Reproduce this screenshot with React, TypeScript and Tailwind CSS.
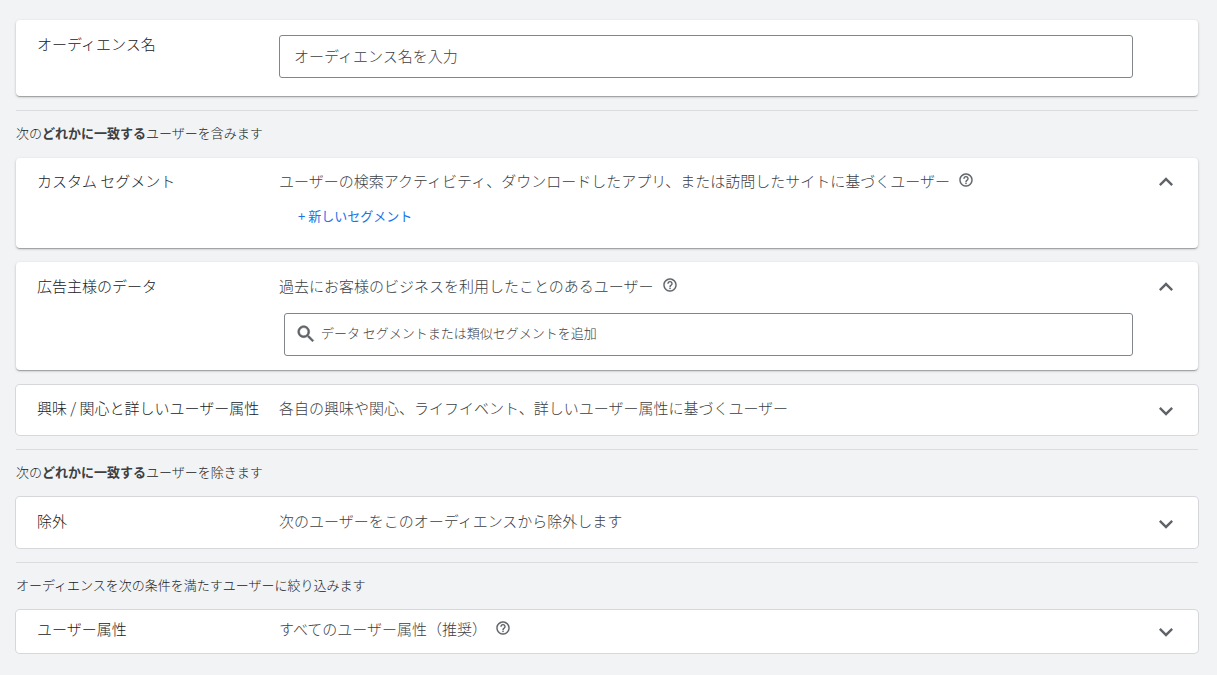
import React, { useState } from 'react';
import clsx from 'clsx';

const HelpButton: React.FC<{ label: string }> = ({ label }) => (
    <button type="button" aria-label={label} className="-mt-0.5 ml-2 shrink-0 text-[#5f6368]">
        <svg viewBox="0 0 24 24" className="h-4 w-4" fill="currentColor" stroke="currentColor" strokeWidth="0.2" aria-hidden="true">
            <path d="M11 18h2v-2h-2v2zm1-16C6.48 2 2 6.48 2 12s4.48 10 10 10 10-4.48 10-10S17.52 2 12 2zm0 18c-4.41 0-8-3.59-8-8s3.59-8 8-8 8 3.59 8 8-3.59 8-8 8zm0-14c-2.21 0-4 1.79-4 4h2c0-1.1.9-2 2-2s2 .9 2 2c0 2-3 1.75-3 5h2c0-2.25 3-2.5 3-5 0-2.21-1.79-4-4-4z" />
        </svg>
    </button>
);

const Chevron: React.FC<{ up: boolean }> = ({ up }) => (
    <svg viewBox="0 0 24 24" className="h-7 w-7" fill="currentColor" aria-hidden="true">
        {up ? (
            <path d="M12 8l-6 6 1.41 1.41L12 10.83l4.59 4.58L18 14z" />
        ) : (
            <path d="M16.59 8.59L12 13.17 7.41 8.59 6 10l6 6 6-6z" />
        )}
    </svg>
);

const raised = 'shadow-[0_1px_1px_0_rgba(0,0,0,0.14),0_2px_1px_-1px_rgba(0,0,0,0.12),0_1px_3px_0_rgba(0,0,0,0.2)]';
const outlined = 'ring-1 ring-[#d5d7da]';

interface PanelProps {
    title: string;
    description: string;
    help?: boolean;
    defaultOpen?: boolean;
    className: string;
    children?: React.ReactNode;
}

const Panel: React.FC<PanelProps> = ({ title, description, help, defaultOpen = false, className, children }) => {
    const [open, setOpen] = useState(defaultOpen);

    return (
        <section className={clsx('flex rounded bg-white pl-[21px] pr-[18px]', open ? raised : outlined, className)}>
            <h2 className="w-[242px] shrink-0 text-[15px] leading-[18px] font-light text-[#202124]">{title}</h2>
            <div className="min-w-0 flex-1">
                <div className="flex items-center text-[15px] leading-[18px] font-light text-[#3c4043]">
                    <p>{description}</p>
                    {help && <HelpButton label={`${title}のヘルプ`} />}
                </div>
                {open && children}
            </div>
            <button
                type="button"
                aria-label={title}
                aria-expanded={open}
                onClick={() => setOpen(!open)}
                className={clsx('-mt-1 -mb-2 ml-[19px] h-7 w-7 shrink-0 text-[#5f6368]', open ? 'self-start' : 'self-end')}
            >
                <Chevron up={open} />
            </button>
        </section>
    );
};

const GroupHeading: React.FC<{ children: React.ReactNode }> = ({ children }) => (
    <div className="mt-[14px] flex h-12 items-center border-t border-[#dadce0] pb-[3px] text-[13px] leading-5 font-light text-[#202124]">
        <p>{children}</p>
    </div>
);

const App: React.FC = () => {
    const [name, setName] = useState('');
    const [query, setQuery] = useState('');

    return (
        <main className="min-h-screen bg-[#f1f3f4] pt-5 pr-[19px] pb-5 pl-4 font-['Noto_Sans_CJK_JP',sans-serif]">
            <section className={clsx('flex rounded bg-white pt-[15px] pr-[65px] pb-[18px] pl-[21px]', raised)}>
                <label htmlFor="audience-name" className="w-[242px] shrink-0 text-[15px] leading-[18px] font-light text-[#202124]">
                    オーディエンス名
                </label>
                <input
                    id="audience-name"
                    type="text"
                    value={name}
                    onChange={(e) => setName(e.target.value)}
                    placeholder="オーディエンス名を入力"
                    className="h-[43px] min-w-0 flex-1 rounded-[3px] border border-[#80868b] px-[14px] pb-0.5 text-[15px] font-light text-[#202124] placeholder:text-[#3c4043]"
                />
            </section>

            <GroupHeading>
                次の<b className="font-bold text-[#3c4043]">どれかに一致する</b>ユーザーを含みます
            </GroupHeading>

            <Panel
                title="カスタム セグメント"
                description="ユーザーの検索アクティビティ、ダウンロードしたアプリ、または訪問したサイトに基づくユーザー"
                help
                defaultOpen
                className="pt-[14px] pb-[22px]"
            >
                <button type="button" className="mt-4 ml-[19px] block text-[13px] leading-5 text-[#1a73e8]">
                    + 新しいセグメント
                </button>
            </Panel>

            <Panel
                title="広告主様のデータ"
                description="過去にお客様のビジネスを利用したことのあるユーザー"
                help
                defaultOpen
                className="mt-[14px] pt-[15px] pb-[14px]"
            >
                <div className="mt-[18px] ml-[5px] flex h-[43px] items-center rounded-[3px] border border-[#80868b] pb-0.5 pl-[10px]">
                    <svg viewBox="0 0 24 24" className="h-[22px] w-[22px] shrink-0 fill-[#5f6368] stroke-[#5f6368]" strokeWidth="0.6" aria-hidden="true">
                        <path d="M15.5 14h-.79l-.28-.27C15.41 12.59 16 11.11 16 9.5 16 5.91 13.09 3 9.5 3S3 5.91 3 9.5 5.91 16 9.5 16c1.61 0 3.09-.59 4.23-1.57l.27.28v.79l5 4.99L20.49 19l-4.99-5zm-6 0C7.01 14 5 11.99 5 9.5S7.01 5 9.5 5 14 7.01 14 9.5 11.99 14 9.5 14z" />
                    </svg>
                    <input
                        type="text"
                        aria-label="データ セグメントまたは類似セグメントを追加"
                        value={query}
                        onChange={(e) => setQuery(e.target.value)}
                        placeholder="データ セグメントまたは類似セグメントを追加"
                        className="h-full min-w-0 flex-1 px-1 pb-0.5 text-[13px] font-light text-[#202124] outline-none placeholder:text-[#3c4043]"
                    />
                </div>
            </Panel>

            <Panel
                title="興味 / 関心と詳しいユーザー属性"
                description="各自の興味や関心、ライフイベント、詳しいユーザー属性に基づくユーザー"
                className="mt-[15px] pt-[14px] pb-[18px]"
            />

            <GroupHeading>
                次の<b className="font-bold text-[#3c4043]">どれかに一致する</b>ユーザーを除きます
            </GroupHeading>

            <Panel
                title="除外"
                description="次のユーザーをこのオーディエンスから除外します"
                className="pt-[15px] pb-[18px]"
            />

            <GroupHeading>オーディエンスを次の条件を満たすユーザーに絞り込みます</GroupHeading>

            <Panel title="ユーザー属性" description="すべてのユーザー属性（推奨）" help className="pt-[10px] pb-[15px]" />
        </main>
    );
};

export default App;
